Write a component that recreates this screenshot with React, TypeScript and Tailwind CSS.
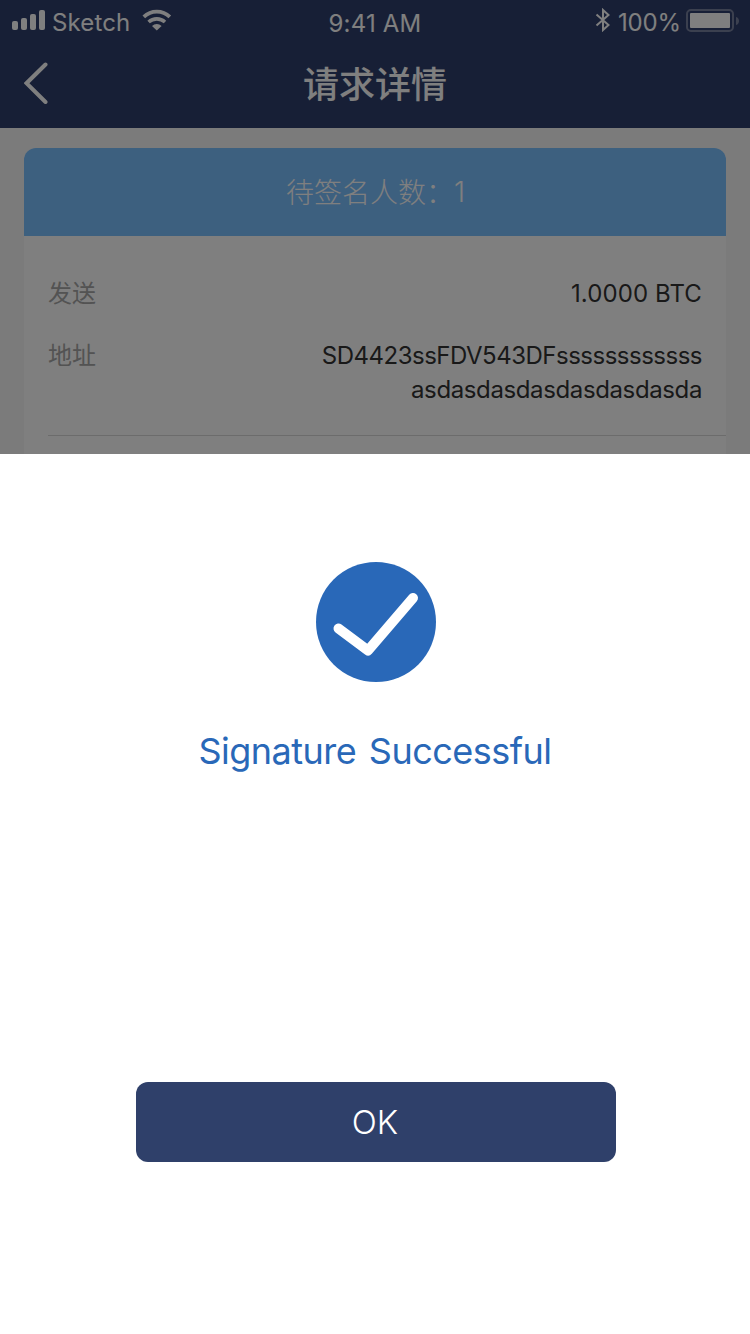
import React from "react";

const LATIN = "font-['Inter','Noto_Sans_CJK_SC',sans-serif]";
const CJK = "font-['Noto_Sans_CJK_SC',sans-serif]";

function StatusBar() {
  return (
    <div className={`flex h-10 items-start justify-between text-[24px] leading-[30px] text-white ${LATIN}`}>
      <div className="flex w-[250px] pl-3">
        <svg className="mt-[10px] h-5 w-[34px] shrink-0" viewBox="0 0 34 20" fill="currentColor">
          <rect x="0" y="11" width="6" height="9" rx="2" />
          <rect x="9" y="8" width="6" height="12" rx="2" />
          <rect x="18" y="4" width="6" height="16" rx="2" />
          <rect x="27" y="0" width="6" height="20" rx="2" />
        </svg>
        <span className="ml-[6px] mt-2 w-[78px] tracking-[0.15px]">Sketch</span>
        <svg className="ml-[12px] mt-[9px] h-[22px] w-[30px] shrink-0" viewBox="0 0 30 22" fill="none" stroke="currentColor">
          <path d="M1.8 7.8a18.8 18.8 0 0 1 26 0" strokeWidth="3.8" />
          <path d="M6.6 13a12.2 12.2 0 0 1 16.4 0" strokeWidth="3.6" />
          <path d="M10 16.9a7.1 7.1 0 0 1 9.6 0L14.8 21.5Z" fill="currentColor" stroke="none" />
        </svg>
      </div>
      <span className="mt-[9px] tracking-[0.2px]">9:41 AM</span>
      <div className="flex w-[250px] justify-end pr-[11px]">
        <svg className="mt-2 h-6 w-[15px] shrink-0" viewBox="0 0 15 24" fill="none" stroke="currentColor" strokeWidth="2">
          <path d="M1.5 6.5 13.5 17 8 22V2L13.5 7 1.5 17.5" />
        </svg>
        <span className="ml-[8px] mt-2 w-[62px] tracking-[-0.2px]">100%</span>
        <svg className="ml-[6px] mt-[9px] h-[23px] w-[53px] shrink-0" viewBox="0 0 53 23">
          <rect x="1" y="1" width="46" height="21" rx="4" fill="none" stroke="white" strokeOpacity="0.35" strokeWidth="2" />
          <rect x="4" y="4" width="40" height="15" rx="1" fill="white" />
          <path d="M50 8c4 1 4 7 0 8Z" fill="white" fillOpacity="0.35" />
        </svg>
      </div>
    </div>
  );
}

function TitleBar() {
  return (
    <div className="flex h-[88px] items-start pl-6">
      <svg className="mt-[22px] h-[42px] w-6 text-white" viewBox="0 0 24 42" fill="none" stroke="currentColor" strokeWidth="4" strokeLinecap="round">
        <path d="M21.5 2.5 2.5 21.2 21.5 40" />
      </svg>
      <h1 className={`mt-4 flex-1 pr-12 text-center text-[36px] font-medium leading-[52px] text-white ${CJK}`}>请求详情</h1>
    </div>
  );
}

function RequestCard() {
  return (
    <section className="mx-6 mt-5 h-[320px] overflow-hidden rounded-t-xl bg-white">
      <div className={`flex h-[88px] items-center justify-center bg-[#7ac0ff] pb-[2px] pl-px text-[28px] text-white ${CJK}`}>
        <span className="font-light">待签名人数：</span>
        <span className="pt-[2px] font-['Inter'] font-light">1</span>
      </div>
      <div className="ml-6 h-[200px] border-b border-[#d8d8d8] pr-6 pt-[39px]">
        <div className="flex justify-between leading-[34px]">
          <span className={`text-[24px] text-[#a6a6a6] ${CJK}`}>发送</span>
          <span className={`pt-[2px] text-[24px] tracking-[0.1px] text-[#333] ${LATIN}`}>1.0000 BTC</span>
        </div>
        <div className="mt-[26px] flex justify-between leading-[34px]">
          <span className={`text-[24px] text-[#a6a6a6] ${CJK}`}>地址</span>
          <span className={`pt-[2px] text-right text-[24px] tracking-[-0.5px] text-[#333] ${LATIN}`}>
            SD4423ssFDV543DFssssssssssss
            <br />
            <span className="tracking-[-0.38px]">asdasdasdasdasdasdasda</span>
          </span>
        </div>
      </div>
    </section>
  );
}

function SuccessSheet() {
  return (
    <section className="flex h-[880px] flex-col items-center bg-white pt-[108px]">
      <svg className="ml-[2px] h-[120px] w-[120px]" viewBox="0 0 120 120">
        <circle cx="60" cy="60" r="60" fill="#2968b8" />
        <path d="M22.5 66.5 52 88.5 97 36" fill="none" stroke="white" strokeWidth="10" strokeLinecap="round" strokeLinejoin="round" />
      </svg>
      <p className={`mt-[44px] text-[36px] leading-[50px] tracking-[-0.52px] text-[#2968b8] [word-spacing:3px] ${LATIN}`}>Signature Successful</p>
      <button className={`ml-[2px] mt-[306px] h-20 w-[480px] rounded-xl bg-[#2f406a] pr-[2px] pt-[2px] text-[33px] font-light text-white ${LATIN}`}>OK</button>
    </section>
  );
}

export default function App() {
  return (
    <main className="h-[1334px] w-[750px] overflow-hidden bg-white">
      <div className="relative h-[454px] overflow-hidden bg-[#f6f6f6]">
        <header className="h-32 bg-[#2f3e6c]">
          <StatusBar />
          <TitleBar />
        </header>
        <RequestCard />
        <div className="absolute inset-0 bg-black/50" />
      </div>
      <SuccessSheet />
    </main>
  );
}
